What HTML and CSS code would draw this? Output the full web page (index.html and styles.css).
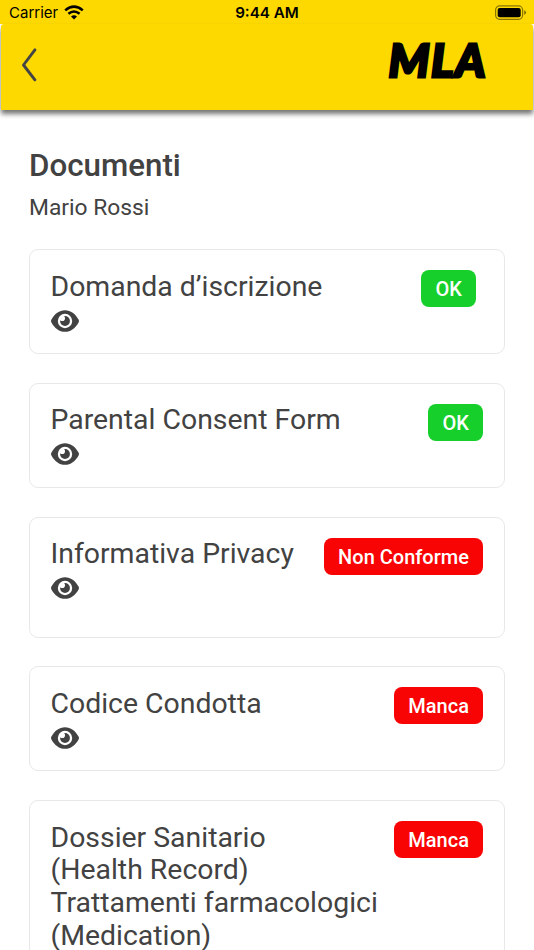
FILE: index.html
```html
<!DOCTYPE html>
<html lang="it">
<head>
<meta charset="utf-8">
<meta name="viewport" content="width=device-width, initial-scale=1">
<title>Documenti</title>
<link rel="stylesheet" href="styles.css">
</head>
<body>
<svg class="defs" width="0" height="0" aria-hidden="true">
  <symbol id="eye" viewBox="0 0 28 22">
    <path fill="currentColor" d="M.3 9.8C3.6 3.6 8.3.2 14 .2s10.4 3.4 13.7 9.6q.5 1.2 0 2.4C24.4 18.4 19.700 21.800 14 21.800S3.600 18.400.3 12.200q-.5-1.200 0-2.400z"/>
    <circle cx="14" cy="11" r="7.200" fill="#fff"/>
    <circle cx="14" cy="11" r="4.900" fill="currentColor"/>
    <circle cx="11.200" cy="8.300" r="2.800" fill="#fff"/>
  </symbol>
</svg>
<div class="status">
  <div class="status-left">
    <span class="carrier">Carrier</span>
    <svg class="wifi" viewBox="0 0 20 15" fill="none" stroke="#000" stroke-width="2.5">
      <path d="M1.2 5.4Q10-2.2 18.800 5.400"/>
      <path d="M4.400 8.800Q10 4.100 15.600 8.800"/>
      <path d="M7 11.400Q10 9 13 11.400L10 14.400Z" fill="#000" stroke="none"/>
    </svg>
  </div>
  <span class="clock">9:44 AM</span>
  <svg class="battery" viewBox="0 0 32 16">
    <rect x=".6" y=".9" width="27" height="13.4" rx="4" fill="none" stroke="#000" stroke-opacity=".45" stroke-width="1.2"/>
    <rect x="2.7" y="2.9" width="23" height="9.3" rx="2" fill="#000"/>
    <path d="M29.2 5.3q1.9.9 1.9 2.3t-1.9 2.3z" fill="#000" fill-opacity=".5"/>
  </svg>
</div>
<header class="header">
  <svg class="back" viewBox="0 0 16 34" fill="none" stroke="#444" stroke-width="2.900" stroke-linecap="round" stroke-linejoin="round"><path d="M13.900 1.900 2.500 17 13.900 31.800"/></svg>
  <svg class="logo" viewBox="0 0 110 76"><text class="logo-text" x="4.5" y="50.800" textLength="98.500" lengthAdjust="spacingAndGlyphs">MLA</text></svg>
</header>
<main class="content">
  <h1 class="heading">Documenti</h1>
  <p class="person">Mario Rossi</p>
  <section class="card">
    <div class="info"><h2 class="title">Domanda d’iscrizione</h2><svg class="eye"><use href="#eye"/></svg></div>
    <span class="badge ok inset">OK</span>
  </section>
  <section class="card">
    <div class="info"><h2 class="title">Parental Consent Form</h2><svg class="eye"><use href="#eye"/></svg></div>
    <span class="badge ok">OK</span>
  </section>
  <section class="card tall">
    <div class="info"><h2 class="title">Informativa Privacy</h2><svg class="eye"><use href="#eye"/></svg></div>
    <span class="badge bad">Non Conforme</span>
  </section>
  <section class="card">
    <div class="info"><h2 class="title">Codice Condotta</h2><svg class="eye"><use href="#eye"/></svg></div>
    <span class="badge bad">Manca</span>
  </section>
  <section class="card long">
    <div class="info"><h2 class="title">Dossier Sanitario<br>(Health Record)<br>Trattamenti farmacologici<br>(Medication)</h2></div>
    <span class="badge bad">Manca</span>
  </section>
</main>
</body>
</html>
```
FILE: styles.css
```css
* { box-sizing: border-box; }
html, body { height: 950px; overflow: hidden; }
body { margin: 0; background: #fff; color: #424242; font-family: Roboto, sans-serif; display: flex; flex-direction: column; }
h1, h2, p { margin: 0; font-weight: 400; }
.defs { display: none; }
.status {
  display: grid; grid-template-columns: 1fr auto 1fr; align-items: center;
  flex: none; height: 24px; padding: 0 7px 0 9px; background: #fdd900; color: #000;
  font-family: Inter, sans-serif; line-height: 24px;
}
.status-left { display: flex; align-items: center; gap: 6px; }
.carrier { font-size: 15px; padding-top: 1px; }
.wifi { width: 20px; height: 15px; margin-top: -1px; }
.clock { font-weight: 600; font-size: 15.2px; margin-right: 2px; padding-top: 1px; }
.battery { width: 32px; height: 16px; justify-self: end; }
.header {
  display: flex; justify-content: space-between; align-items: flex-start;
  flex: none; height: 86px; margin: 0 1px; padding: 0 39px 0 20px; background: #fdd900;
  border-radius: 3px 3px 0 0; box-shadow: 0 4px 5px rgba(0, 0, 0, .55);
}
.back { width: 16px; height: 34px; margin-top: 24px; }
.logo { width: 110px; height: 76px; margin-top: 2px; overflow: visible; }
.logo-text { font: italic 900 46px Lato, sans-serif; letter-spacing: 1.5px; fill: #000; stroke: #000; stroke-width: 2.8px; }
.content { flex: 1; min-height: 0; overflow: hidden; padding: 37px 29.5px 0 29px; }
.heading { font-size: 31.3px; line-height: 37px; font-weight: 500; }
.person { margin-top: 10px; font-size: 22.8px; line-height: 27px; }
.card {
  display: flex; justify-content: space-between; align-items: flex-start;
  height: 105px; margin-bottom: 28.8px; padding: 20px 20.5px 0 20.5px;
  border: 1.5px solid #e8e8e8; border-radius: 9px;
}
.person + .card { margin-top: 28px; }
.card.tall { height: 121px; }
.card.long { height: 210px; }
.title { font-size: 28.4px; line-height: 32.7px; white-space: nowrap; padding-top: .5px; }
.eye { display: block; width: 28px; height: 22px; margin-top: 6.3px; }
.badge {
  height: 37px; padding: 0 14.1px; border-radius: 8px;
  font-size: 20px; font-weight: 500; line-height: 38px; color: #fff; white-space: nowrap;
}
.badge.ok { background: #17cf2b; }
.badge.bad { background: #f90404; }
.badge.inset { margin-right: 7px; }
```
